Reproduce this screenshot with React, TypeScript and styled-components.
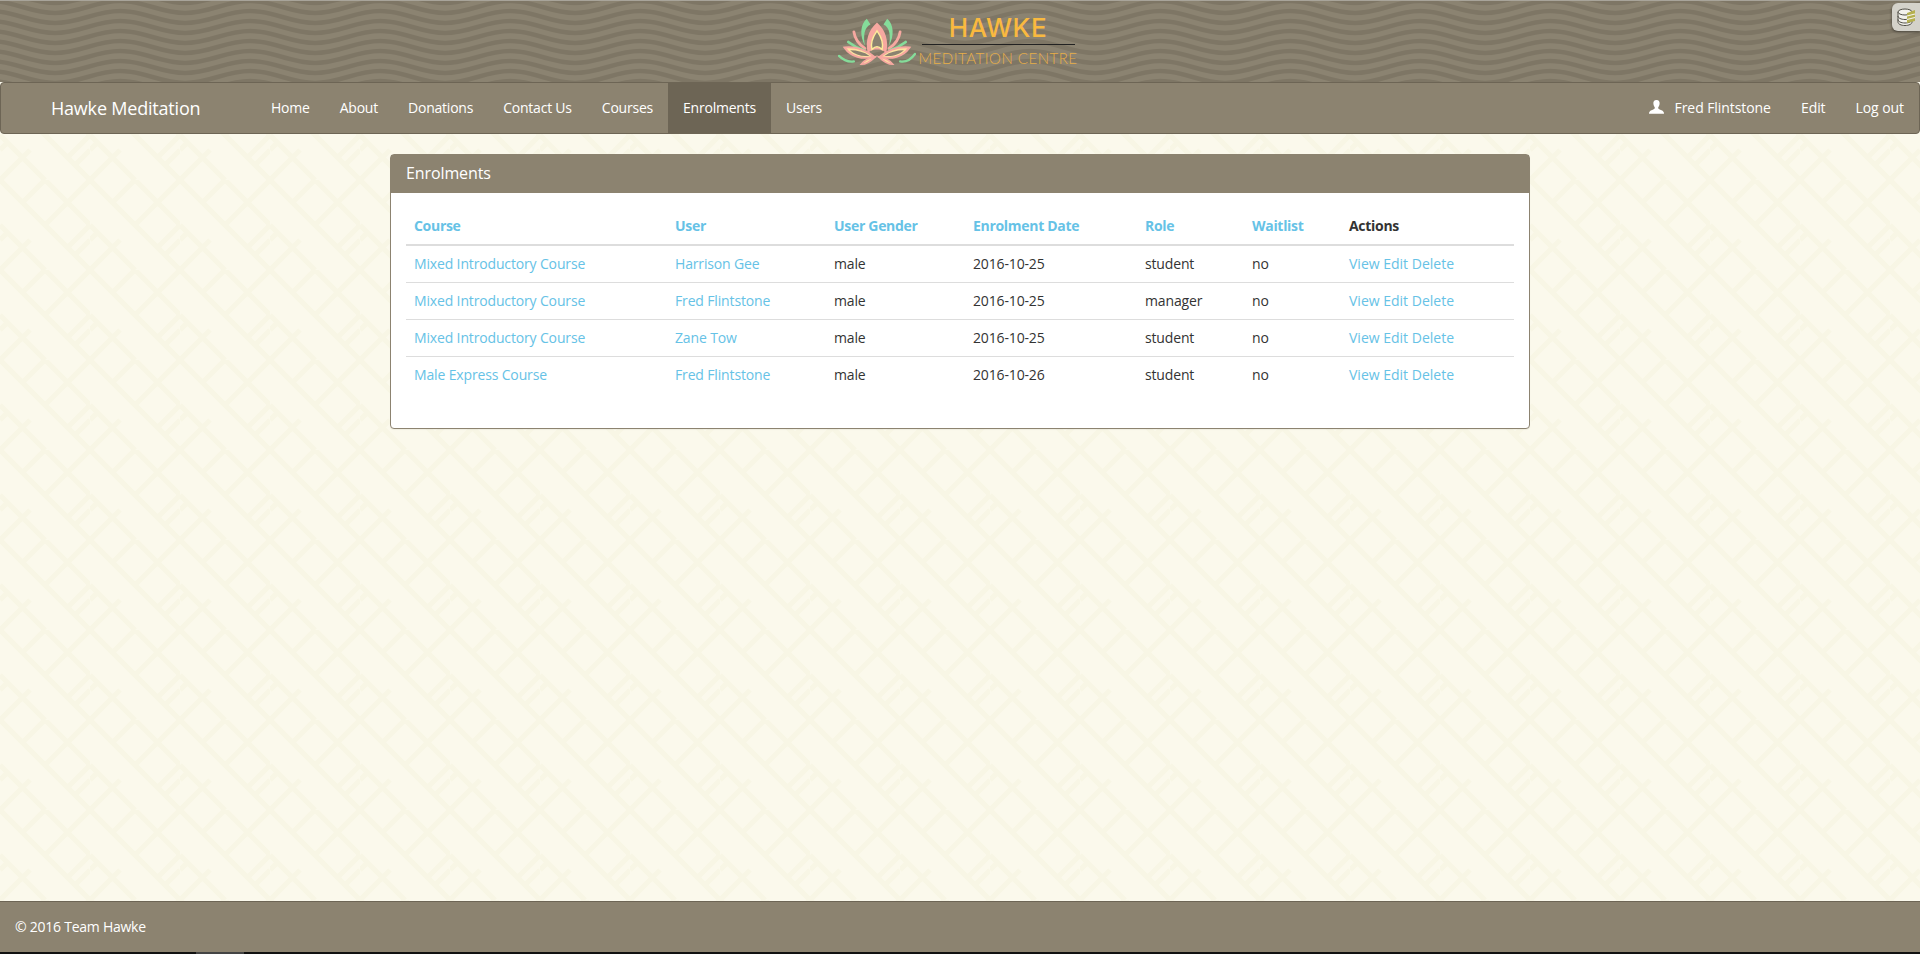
import React from 'react';
import styled, { createGlobalStyle } from 'styled-components';

const wavePath = (y: number) =>
  `M-10 ${y} C 15 ${y} 30 ${y + 12} 55 ${y + 12} S 95 ${y} 120 ${y} S 160 ${y + 12} 185 ${y + 12} S 225 ${y} 250 ${y}`;

// wave lines tile for the header band
const waveTile = () => {
  const lines = [-20, -10, 0, 10, 20, 30, 40, 50, 60, 70]
    .map((y) => `<path d='${wavePath(y)}' fill='none' stroke='#7e7665' stroke-width='4.5'/>`)
    .join('');
  return `url("data:image/svg+xml,${encodeURIComponent(
    `<svg xmlns='http://www.w3.org/2000/svg' width='130' height='60'>${lines}</svg>`
  )}")`;
};

// key-fret tile for the page background
const fretTile = () => {
  const d =
    'M0 0L120 120 M60 0L120 60 M0 60L60 120 M30 30L60 0 M90 90L120 60 M0 120L30 90 M120 0L80 40 M40 80L15 105 M75 15L100 40 M20 80L45 105 M100 100L120 80 M0 80L12 68 M60 60L85 35';
  return `url("data:image/svg+xml,${encodeURIComponent(
    `<svg xmlns='http://www.w3.org/2000/svg' width='90' height='90' viewBox='0 0 120 120'><path d='${d}' fill='none' stroke='#f8f6e5' stroke-width='7'/></svg>`
  )}")`;
};

const GlobalStyle = createGlobalStyle`
  html, body {
    margin: 0;
    padding: 0;
    height: 100%;
  }
  body {
    font-family: "Open Sans", "Noto Sans", "Liberation Sans", sans-serif;
    font-size: 14px;
    line-height: 20px;
    color: #333333;
    background-color: #fbf9ec;
    background-image: ${fretTile()};
  }
  #root {
    height: 100%;
  }
`;

const Page = styled.div`
  display: flex;
  flex-direction: column;
  height: 954px;
  overflow: hidden;
  position: relative;
`;

const Banner = styled.header`
  height: 81px;
  border-top: 1px solid #a8a49a;
  background-color: #8b8371;
  background-image: ${waveTile()};
  display: flex;
  justify-content: center;
  align-items: flex-start;
  flex: none;
`;

const Logo = styled.div`
  display: flex;
  margin: 15px 0 0 0;
  transform: translateX(-2px);
`;

const LogoMark = styled.div`
  margin-top: 1px;
  width: 80px;
`;

const LogoWords = styled.div`
  display: flex;
  flex-direction: column;
  align-items: center;
  width: 160px;
`;

const LogoTitle = styled.div`
  font-family: "Inter", "Lato", sans-serif;
  font-size: 26px;
  line-height: 24px;
  font-weight: 500;
  letter-spacing: 0.5px;
  color: #f9b93f;
  width: 153px;
  text-align: center;
  border-bottom: 1px solid #222222;
  padding-bottom: 4px;
`;

const LogoSub = styled.div`
  font-family: "Lato", sans-serif;
  font-weight: 300;
  font-size: 15px;
  line-height: 20px;
  margin-top: 3px;
  white-space: nowrap;
  letter-spacing: 0.5px;
  color: #e8ae48;
`;

const DbBadge = styled.div`
  position: absolute;
  top: 3px;
  right: 0;
  width: 28px;
  height: 28px;
  background: #d4d2ca;
  border-radius: 6px 0 0 6px;
  box-shadow: 0 1px 3px rgba(0, 0, 0, 0.5);
  display: flex;
  align-items: center;
  justify-content: center;
`;

const NavBar = styled.nav`
  height: 52px;
  flex: none;
  box-sizing: border-box;
  background: #8c8370;
  border: 1px solid #6d6555;
  border-radius: 4px;
  display: flex;
  align-items: stretch;
  justify-content: space-between;
  color: #ffffff;
`;

const NavGroup = styled.div`
  display: flex;
  align-items: stretch;
  letter-spacing: -0.07px;
`;

const MainNav = styled(NavGroup)`
  letter-spacing: -0.22px;
`;

const Brand = styled.a`
  font-size: 18px;
  line-height: 50px;
  width: 255px;
  padding-left: 50px;
  box-sizing: border-box;
  letter-spacing: -0.2px;
  color: #ffffff;
`;

const NavLink = styled.a<{ $active?: boolean }>`
  display: flex;
  align-items: center;
  gap: 11px;
  padding: 0 15px;
  color: #ffffff;
  background: ${(p) => (p.$active ? '#6d6555' : 'transparent')};
`;

const UserIcon = styled.svg`
  margin-top: -3px;
`;

const Main = styled.main`
  flex: 1;
  padding-top: 20px;
  display: flex;
  justify-content: center;
`;

const Panel = styled.section`
  width: 1140px;
  height: 275px;
  box-sizing: border-box;
  background: #ffffff;
  border: 1px solid #8c8370;
  border-radius: 4px;
  box-shadow: 0 1px 1px rgba(0, 0, 0, 0.05);
`;

const PanelHeading = styled.h3`
  margin: 0;
  height: 38px;
  padding: 0 15px;
  font-size: 16px;
  font-weight: 400;
  line-height: 36px;
  letter-spacing: -0.1px;
  color: #ffffff;
  background: #8c8370;
`;

const PanelBody = styled.div`
  padding: 15px;
`;

const Table = styled.table`
  width: 100%;
  table-layout: fixed;
  border-collapse: collapse;
  border-spacing: 0;
`;

const HeadCell = styled.th`
  padding: 8px;
  text-align: left;
  font-weight: 700;
  letter-spacing: -0.3px;
  border-bottom: 2px solid #dddddd;
`;

const Cell = styled.td`
  padding: 8px;
  border-top: 1px solid #dddddd;
  white-space: nowrap;
  letter-spacing: -0.15px;
  tr:first-child > & {
    border-top: 0;
  }
`;

const ActionCell = styled(Cell)`
  letter-spacing: 0;
`;

const TableLink = styled.a`
  color: #66c2e6;
`;

const Footer = styled.footer`
  height: 51px;
  flex: none;
  box-sizing: border-box;
  border-top: 1px solid #6d6555;
  background: #8c8370;
  padding: 0 15px;
  display: flex;
  align-items: center;
  letter-spacing: -0.25px;
  color: #ffffff;
  margin-bottom: 2px;
`;

const BottomEdge = styled.div`
  position: absolute;
  left: 0;
  right: 0;
  bottom: 0;
  height: 2px;
  background: #111111;
`;

const EdgeTab = styled.div`
  position: absolute;
  left: 196px;
  top: 0;
  width: 48px;
  height: 2px;
  background: #444444;
`;

const navItems = ['Home', 'About', 'Donations', 'Contact Us', 'Courses', 'Enrolments', 'Users'];

const columns: [string, number][] = [
  ['Course', 261],
  ['User', 159],
  ['User Gender', 139],
  ['Enrolment Date', 172],
  ['Role', 107],
  ['Waitlist', 97],
  ['Actions', 173],
];

const rows = [
  ['Mixed Introductory Course', 'Harrison Gee', 'male', '2016-10-25', 'student', 'no'],
  ['Mixed Introductory Course', 'Fred Flintstone', 'male', '2016-10-25', 'manager', 'no'],
  ['Mixed Introductory Course', 'Zane Tow', 'male', '2016-10-25', 'student', 'no'],
  ['Male Express Course', 'Fred Flintstone', 'male', '2016-10-26', 'student', 'no'],
];

const Lotus = () => (
  <svg width="78" height="50" viewBox="0 0 84 54">
    <g strokeLinecap="round" fill="none">
      {/* centre petal */}
      <path d="M42 6 C33 14 29 25 32 39 C36 35 39 35 42 35 C45 35 48 35 52 39 C55 25 51 14 42 6Z" fill="#f6a8a0" />
      <path d="M42 15 C37 22 35 29 36.5 35 C38.5 33 41 32 42 32 C43 32 45.5 33 47.5 35 C49 29 47 22 42 15Z" fill="#8a8270" stroke="#fdeb9a" strokeWidth="1.6" />
      {/* upper green petals */}
      <path d="M31 2 C24 8 23 20 29 31 C27 21 28 11 35 8Z" fill="#85dc9a" />
      <path d="M53 2 C60 8 61 20 55 31 C57 21 56 11 49 8Z" fill="#85dc9a" />
      {/* side pink */}
      <path d="M17 16 C18 23 23 30 29 34" stroke="#f6a8a0" strokeWidth="3" />
      <path d="M67 16 C66 23 61 30 55 34" stroke="#f6a8a0" strokeWidth="3" />
      <path d="M11 27 C16 31 22 34 28 36" stroke="#85dc9a" strokeWidth="3" />
      <path d="M73 27 C68 31 62 34 56 36" stroke="#85dc9a" strokeWidth="3" />
      {/* lower broad petals */}
      <path d="M7 33 C17 32 29 35 39 43 C26 46 14 43 7 33Z" fill="#fde2a0" stroke="#f6a8a0" strokeWidth="2.2" />
      <path d="M77 33 C67 32 55 35 45 43 C58 46 70 43 77 33Z" fill="#fde2a0" stroke="#f6a8a0" strokeWidth="2.2" />
      <path d="M13 36 C21 36 28 38 34 42 C26 43 18 41 13 36Z" fill="#8a8270" />
      <path d="M71 36 C63 36 56 38 50 42 C58 43 66 41 71 36Z" fill="#8a8270" />
      <path d="M1 42 C6 47 11 49 17 48" stroke="#85dc9a" strokeWidth="2.5" />
      <path d="M83 40 C78 47 73 49 67 48" stroke="#85dc9a" strokeWidth="2.5" />
      <path d="M25 51 C31 51 36 47 40 43 C34 44 29 46 25 51Z" fill="#fde2a0" stroke="#f6a8a0" strokeWidth="1.8" />
      <path d="M59 51 C53 51 48 47 44 43 C50 44 55 46 59 51Z" fill="#fde2a0" stroke="#f6a8a0" strokeWidth="1.8" />
    </g>
  </svg>
);

const UserGlyph = () => (
  <UserIcon width="15" height="14" viewBox="0 0 16 15" fill="#ffffff">
    <path d="M8 0 C10.8 0 11.6 2.2 11.3 4.4 C11.1 6 10.4 7.2 9.8 8 C9.6 9.2 10.4 9.8 12 10.4 C14 11.1 15.4 11.8 16 13.6 V14.6 H0 V13.6 C0.6 11.8 2 11.1 4 10.4 C5.6 9.8 6.4 9.2 6.2 8 C5.6 7.2 4.9 6 4.7 4.4 C4.4 2.2 5.2 0 8 0Z" />
  </UserIcon>
);

const DbGlyph = () => (
  <svg width="19" height="18" viewBox="0 0 19 18" fill="none" stroke="#4f4d45" strokeWidth="1">
    <path d="M1 4 V14 C1 16 4 17.5 8 17.5 C12 17.5 15 16 15 14 V4" fill="#f3f2ec" />
    <ellipse cx="8" cy="4" rx="7" ry="3" fill="#f3f2ec" />
    <path d="M1 8 C1 10 4 11.5 8 11.5 C12 11.5 15 10 15 8 M1 11.5 C1 13.5 4 15 8 15 C12 15 15 13.5 15 11.5" />
    <path d="M10 5 L18 2 V13 L10 15Z" fill="#b5b04f" stroke="none" />
    <path d="M10 8 L18 6 M10 11.5 L18 9.5" stroke="#f3f2ec" strokeWidth="1.2" />
  </svg>
);

export default function App() {
  return (
    <Page>
      <GlobalStyle />
      <Banner>
        <Logo>
          <LogoMark>
            <Lotus />
          </LogoMark>
          <LogoWords>
            <LogoTitle>HAWKE</LogoTitle>
            <LogoSub>MEDITATION CENTRE</LogoSub>
          </LogoWords>
        </Logo>
        <DbBadge>
          <DbGlyph />
        </DbBadge>
      </Banner>
      <NavBar>
        <MainNav>
          <Brand>Hawke Meditation</Brand>
          {navItems.map((item) => (
            <NavLink key={item} $active={item === 'Enrolments'}>
              {item}
            </NavLink>
          ))}
        </MainNav>
        <NavGroup>
          <NavLink>
            <UserGlyph />
            Fred Flintstone
          </NavLink>
          <NavLink>Edit</NavLink>
          <NavLink>Log out</NavLink>
        </NavGroup>
      </NavBar>
      <Main>
        <Panel>
          <PanelHeading>Enrolments</PanelHeading>
          <PanelBody>
            <Table>
              <colgroup>
                {columns.map(([name, width]) => (
                  <col key={name} width={width} />
                ))}
              </colgroup>
              <thead>
                <tr>
                  {columns.map(([name]) => (
                    <HeadCell key={name}>
                      {name === 'Actions' ? name : <TableLink>{name}</TableLink>}
                    </HeadCell>
                  ))}
                </tr>
              </thead>
              <tbody>
                {rows.map((row, i) => (
                  <tr key={i}>
                    <Cell>
                      <TableLink>{row[0]}</TableLink>
                    </Cell>
                    <Cell>
                      <TableLink>{row[1]}</TableLink>
                    </Cell>
                    <Cell>{row[2]}</Cell>
                    <Cell>{row[3]}</Cell>
                    <Cell>{row[4]}</Cell>
                    <Cell>{row[5]}</Cell>
                    <ActionCell>
                      <TableLink>View</TableLink> <TableLink>Edit</TableLink> <TableLink>Delete</TableLink>
                    </ActionCell>
                  </tr>
                ))}
              </tbody>
            </Table>
          </PanelBody>
        </Panel>
      </Main>
      <Footer>© 2016 Team Hawke</Footer>
      <BottomEdge>
        <EdgeTab />
      </BottomEdge>
    </Page>
  );
}
